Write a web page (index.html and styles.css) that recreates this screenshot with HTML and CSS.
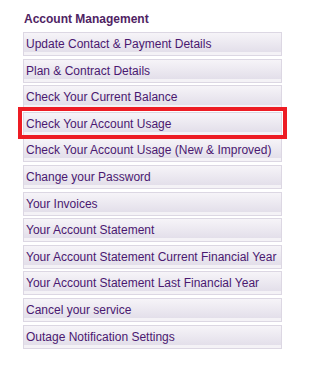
FILE: index.html
```html
<!DOCTYPE html>
<html>
<head>
<meta charset="utf-8">
<link rel="stylesheet" href="styles.css">
</head>
<body>
<div class="panel">
  <h3 class="title">Account Management</h3>
  <ul class="menu">
    <li class="item">Update Contact &amp; Payment Details</li>
    <li class="item">Plan &amp; Contract Details</li>
    <li class="item">Check Your Current Balance</li>
    <li class="item highlighted">Check Your Account Usage</li>
    <li class="item">Check Your Account Usage (New &amp; Improved)</li>
    <li class="item">Change your Password</li>
    <li class="item">Your Invoices</li>
    <li class="item">Your Account Statement</li>
    <li class="item">Your Account Statement Current Financial Year</li>
    <li class="item">Your Account Statement Last Financial Year</li>
    <li class="item">Cancel your service</li>
    <li class="item">Outage Notification Settings</li>
  </ul>
</div>
</body>
</html>
```

FILE: styles.css
```css
html, body {
  margin: 0;
  padding: 0;
  background: #ffffff;
}

.panel {
  padding: 12px 0 0 23px;
  font-family: "Liberation Sans", Arial, sans-serif;
}

.title {
  margin: 0 0 6px 1px;
  font-size: 12px;
  line-height: 14px;
  font-weight: bold;
  color: #4f2363;
}

.menu {
  list-style: none;
  margin: 0;
  padding: 0;
  display: flex;
  flex-direction: column;
  gap: 2.6px;
}

.item {
  box-sizing: border-box;
  width: 259px;
  height: 24px;
  padding: 1px 0 1px 2px;
  line-height: 20px;
  font-size: 12px;
  color: #4a1870;
  border: 1px solid #dcd7e3;
  background: linear-gradient(to bottom, #f6f4f8 0%, #e3dfea 86%, #f4f2f6 87%, #f4f2f6 100%);
  white-space: nowrap;
}

.highlighted {
  position: relative;
}

.highlighted::after {
  content: "";
  position: absolute;
  top: -6px;
  left: -6px;
  right: -6px;
  bottom: -4px;
  border: 4px solid #ed1c24;
}
```
